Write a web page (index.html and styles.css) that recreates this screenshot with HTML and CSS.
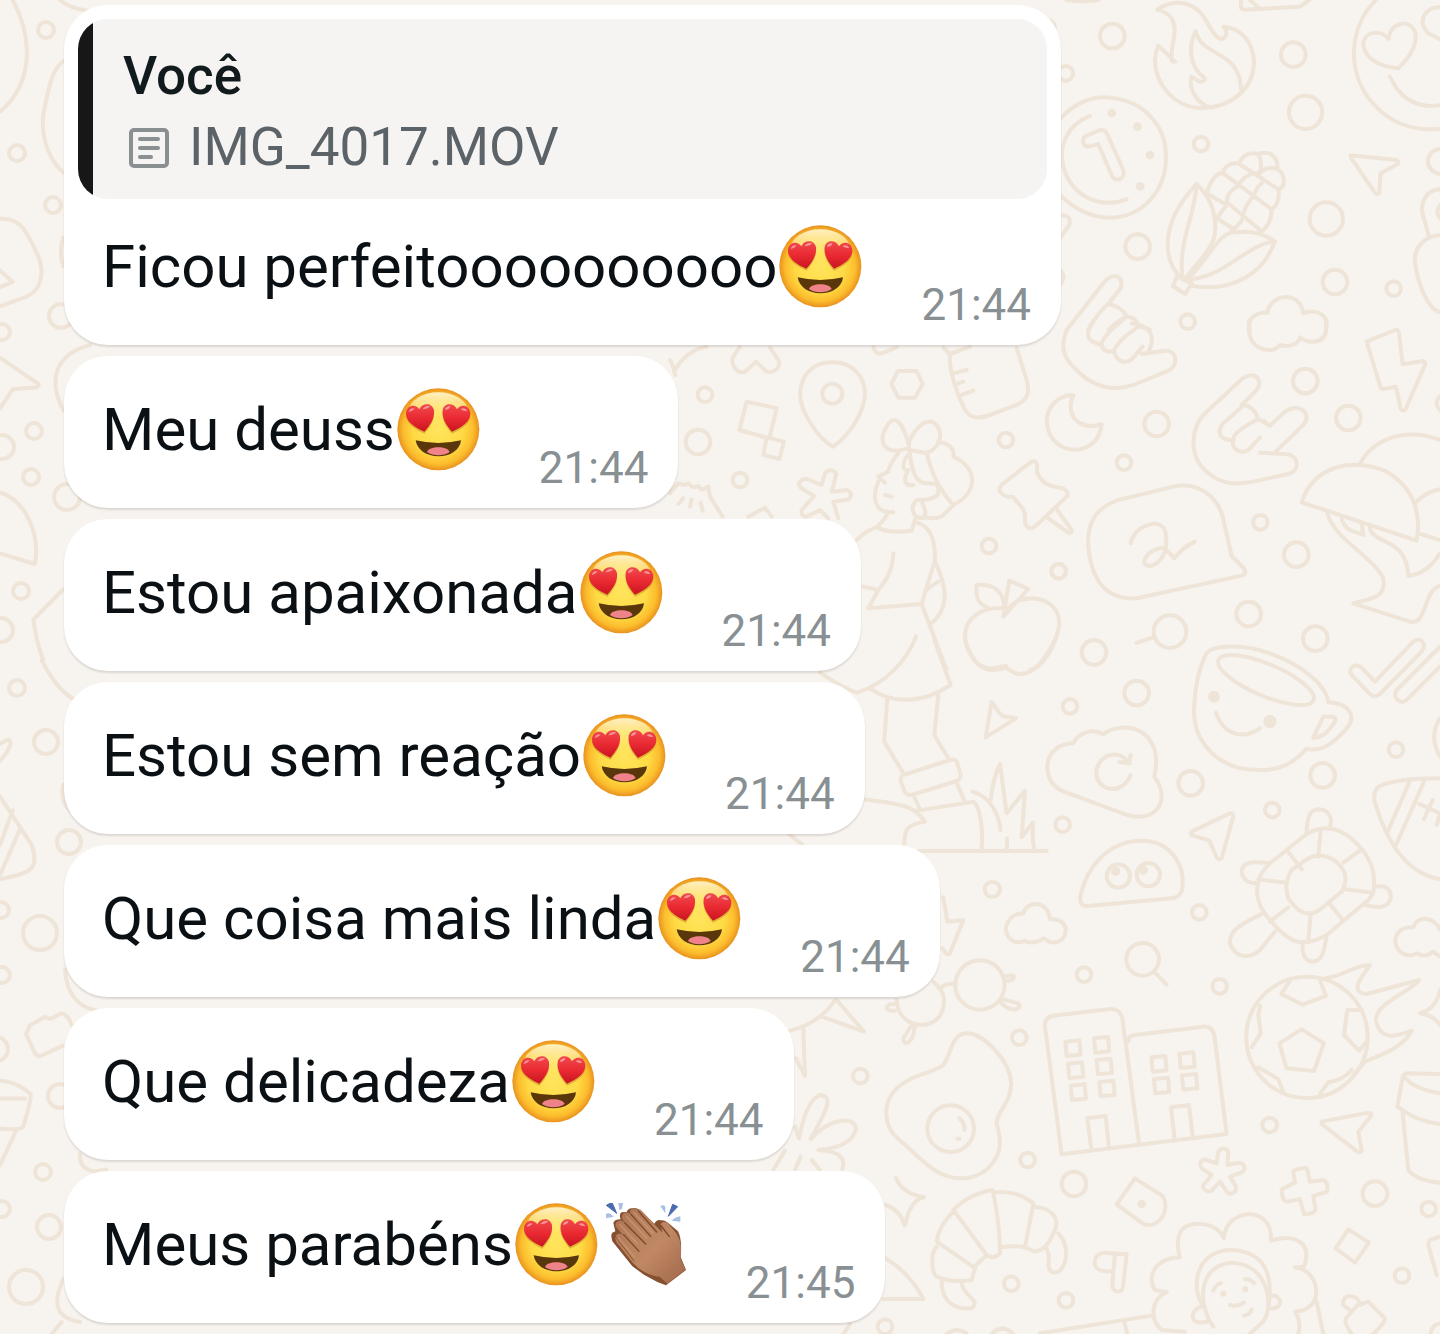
FILE: index.html
```
<!DOCTYPE html>
<html lang="pt-BR">

<head>
  <meta charset="UTF-8">
  <meta name="viewport" content="width=device-width, initial-scale=1.0">
  <title>Chat</title>
  <link rel="stylesheet" href="styles.css">
</head>

<body>
  <!-- wallpaper doodles -->
  <svg class="wallpaper" viewBox="0 0 1440 1334" preserveAspectRatio="xMinYMin slice" aria-hidden="true">
    <!-- flame, coin, corn, smiley -->
    <g transform="translate(1040 0) scale(.3333)">
      <path d="M80 0Q130 8 175 0M603 0V22Q605 29 615 29L780 20L808 0M630 0L655 22M32 62Q50 75 42 92" />
      <path d="M352 29C400 -5 455 5 485 42C510 75 520 112 543 117C560 115 566 95 550 80C602 82 642 130 642 187C640 270 570 325 480 324C400 320 345 250 345 180Q347 155 355 137L405 185Q390 188 395 165C395 125 415 90 395 55Q380 35 352 29Z" />
      <path d="M510 322C470 310 445 265 454 230L480 245Q500 243 492 232C460 210 437 155 467 93C485 175 600 145 604 272" />
      <circle cx="217" cy="108" r="37" /><circle cx="760" cy="164" r="37" /><circle cx="797" cy="337" r="50" />
      <circle cx="77" cy="220" r="22" /><circle cx="483" cy="432" r="22" /><circle cx="859" cy="657" r="50" />
      <circle cx="293" cy="740" r="37" /><circle cx="885" cy="846" r="37" /><circle cx="1061" cy="866" r="22" />
      <circle cx="443" cy="965" r="22" /><circle cx="1201" cy="484" r="37" /><circle cx="1170" cy="160" r="228" />
      <path d="M1075 205C1020 200 970 175 970 130C975 90 1030 90 1046 118C1050 60 1120 55 1127 105C1130 140 1105 175 1075 205ZM1200 22C1155 20 1130 65 1165 100L1200 118M1050 230Q1090 318 1175 318L1200 316" />
      <path d="M60 357C110 300 170 285 220 295C310 305 378 375 378 470C378 570 310 652 210 653Q130 653 60 585" />
      <path d="M150 348C80 375 55 440 70 500C95 590 180 628 260 598M145 440C125 440 122 410 145 405L175 392Q195 385 203 405L250 510C258 535 228 550 216 528L175 432L145 440Z" />
      <g class="fill"><circle cx="215" cy="339" r="13" /><circle cx="292" cy="380" r="13" /><circle cx="330" cy="465" r="13" /><circle cx="301" cy="559" r="13" /></g>
      <path d="M470 552C415 610 383 670 383 735C383 790 410 825 432 840L412 828L398 858L436 882L455 850L432 840C470 790 520 745 525 700C530 640 510 590 470 552ZM470 552C465 650 415 720 427 830M440 842C510 770 540 690 590 697Q650 688 705 724C670 820 580 880 450 857M440 840C560 830 610 740 700 724" />
      <path d="M500 580C510 545 530 515 550 520C550 500 575 485 598 492C605 465 630 455 655 462C690 450 715 470 712 508C735 520 740 560 715 568C720 595 710 620 695 628C695 660 680 685 660 698M550 520L695 628M598 492L715 568M655 462Q670 490 658 522C620 510 592 560 592 560M712 508Q680 495 658 522M592 560Q560 575 560 612M640 590Q650 560 665 550M610 640Q620 610 640 590M500 580L560 615L530 655M530 655L585 690M565 610L660 690M575 690Q610 670 610 640" />
      <path d="M932 466L1070 480Q1080 485 1072 493L1022 520L1018 578Q1012 588 1005 578L932 472Z" />
      <path d="M1200 568C1150 570 1140 620 1150 650L1168 712M1200 705C1150 710 1120 745 1125 790C1135 850 1160 925 1200 937M1200 615Q1185 635 1200 655" />
      <path d="M60 645Q95 645 88 675L60 715M60 810Q80 830 60 855" />
      <!-- call-me hand and cloud -->
      <path d="M80 990L190 850C215 815 255 825 242 865L205 912C250 920 260 950 262 950C290 950 295 980 295 980Q315 980 330 990M145 990Q180 930 205 912M205 990Q240 955 262 950" />
      <path d="M630 990C620 955 650 935 683 938C690 880 780 870 790 940C830 925 870 945 858 990" />
    </g>

    <!-- hands, speech bubble, moon, umbrella -->
    <g transform="translate(1040 320) scale(.3333)">
      <path d="M80 30C60 80 70 110 100 140C155 205 225 215 280 195L385 152C420 135 410 85 370 93L305 102M162 0C140 30 135 55 165 68L185 75C190 95 205 98 222 93C230 130 260 130 275 118L308 80M185 75Q185 50 250 0M222 93Q230 65 295 20M275 10C330 15 350 50 325 97" />
      <path d="M628 0C620 60 645 90 690 90Q710 88 720 75C745 82 775 75 780 52C800 70 855 75 858 30V0" />
      <path d="M100 225C50 225 20 265 20 305C25 370 75 395 120 388C155 380 180 355 185 312C135 330 90 305 92 255Q94 240 100 225Z" />
      <path d="M980 65L1065 30Q1075 27 1077 40L1088 133L1150 123Q1158 125 1155 135L1097 267Q1088 277 1082 265L1068 200L1030 207Q1022 205 1020 197Z" />
      <circle cx="796" cy="183" r="37" /><circle cx="350" cy="312" r="37" />
      <circle cx="925" cy="294" r="37" /><circle cx="252" cy="428" r="22" /><circle cx="661" cy="607" r="22" />
      <circle cx="769" cy="704" r="37" /><circle cx="56" cy="754" r="22" /><circle cx="626" cy="882" r="37" />
      <circle cx="826" cy="956" r="37" /><circle cx="1215" cy="250" r="25" />
      <circle cx="390" cy="935" r="49" /><path d="M290 969L340 952" />
      <path d="M605 255L650 210C675 175 635 150 605 178L500 275C450 320 445 410 500 455C550 500 600 492 640 485L740 463C785 455 780 400 730 402L660 398M605 255C635 255 650 280 655 297L690 317L735 275C775 245 820 280 790 315L710 392M605 262L550 310C520 350 560 365 580 358C570 395 615 405 630 385L660 352M580 358Q580 335 655 297L675 305" />
      <path d="M400 500L235 540C165 565 140 610 145 680C155 790 205 840 290 835L605 767Q625 760 610 743L575 708L548 590C530 525 470 485 400 500Z" />
      <path d="M272 670C285 610 370 590 377 640C390 730 320 755 313 727C315 690 370 680 375 685L403 715Q430 680 465 665" />
      <path d="M785 547L1130 662C1145 580 1120 500 1040 455C930 410 820 440 785 547ZM960 430C1010 345 1110 325 1200 360M1130 545Q1160 515 1200 508M1135 640L1200 660M862 580C885 660 1000 710 1030 775C1040 830 1000 835 940 850L1110 905C1160 920 1150 810 1200 798M905 597C915 635 950 635 970 645L965 612M990 625C1000 675 1100 650 1105 768Q1165 760 1200 700" />
    </g>

    <!-- cup, cloud, turtle, ticks, rugby ball -->
    <g transform="translate(1040 640) scale(.3333)">
      <path d="M498 42C520 10 620 15 690 40C790 75 860 140 865 187C930 190 950 230 920 265C880 310 850 335 798 327C750 385 690 400 600 385C510 360 460 290 462 210Q465 110 498 42Z" />
      <ellipse cx="678" cy="120" rx="155" ry="48" transform="rotate(23 678 120)" />
      <path d="M528 218C550 285 610 300 660 265M850 230H880Q890 235 885 245C865 275 850 293 820 293Z" />
      <g class="fill"><circle cx="522" cy="170" r="18" /><circle cx="690" cy="245" r="20" /></g>
      <path d="M100 310C50 310 20 345 22 385C25 430 55 450 80 458L260 525C350 550 395 480 343 410C365 320 320 260 245 263Q210 265 190 283C150 260 110 285 100 310Z" />
      <path d="M272 405C250 460 185 460 170 410C160 360 220 320 260 360L270 370M272 345L268 370L238 366" />
      <path d="M1005 125L970 88C945 60 915 90 940 110L990 162Q1005 175 1020 162L1145 35C1165 5 1135 -10 1120 5ZM1200 20L1070 150C1055 175 1085 200 1105 175L1200 80" />
      <circle cx="162" cy="37" r="37" /><circle cx="290" cy="159" r="37" /><circle cx="90" cy="199" r="22" />
      <circle cx="452" cy="430" r="37" /><circle cx="848" cy="406" r="37" /><circle cx="697" cy="510" r="22" />
      <circle cx="68" cy="554" r="22" /><circle cx="1068" cy="329" r="22" /><circle cx="478" cy="817" r="22" />
      <path d="M1200 235Q1165 290 1200 350" />
      <path d="M455 575L570 520Q580 518 580 530L545 655Q537 662 530 652L508 602L455 585Q450 580 455 575Z" />
      <path d="M145 798Q115 800 122 765C140 680 205 605 300 602C395 600 440 680 425 755Q415 773 395 775Z" />
      <circle cx="235" cy="708" r="35" /><circle cx="325" cy="704" r="35" />
      <g class="fill"><circle cx="227" cy="694" r="14" /><circle cx="310" cy="690" r="14" /></g>
      <path d="M690 670L800 582C870 540 930 580 975 640C1010 690 1010 760 985 780L860 885C780 930 740 900 695 845C640 790 635 720 690 670Z" />
      <path d="M755 690L800 658C850 630 890 660 910 690Q925 720 905 755L845 805C800 840 770 810 745 775Q730 730 755 690ZM842 572L835 650M742 632L785 688M910 668L965 628M655 718L740 728M915 748L1000 758M690 845L745 802M812 820L805 905M868 790L908 840" />
      <path d="M800 578C800 530 810 508 838 508C870 510 880 540 868 565M690 670C650 665 605 660 605 697C610 730 640 730 655 730M1008 740C1040 735 1055 750 1052 775C1045 805 1020 805 975 795M665 822C610 850 565 870 570 910C590 965 640 950 660 930L705 875M788 910C785 950 800 965 820 965C850 960 852 930 860 888" />
      <path d="M1200 415C1120 415 1060 420 1020 438Q1000 450 1003 480C1040 610 1100 700 1200 718M1110 422L1042 578M1155 418L1065 622M1138 492L1200 520M1178 480L1152 537M1200 525L1190 555" />
      <path d="M1200 870C1190 835 1135 820 1120 862C1080 860 1060 885 1068 915C1080 950 1115 950 1130 940Q1155 955 1180 935L1200 950" />
      <circle cx="308" cy="958" r="49" /><path d="M345 998L380 1034" />
    </g>

    <!-- buildings, football, curly head -->
    <g transform="translate(1040 960) scale(.3333)">
      <path d="M65 583L15 200Q12 172 40 167L210 147Q240 145 247 175L297 550M65 583L560 522L523 225Q515 197 490 200L290 224Q262 228 265 245" />
      <path d="M76 245L118 241L122 284L80 288ZM162 235L204 231L208 274L166 278ZM84 311L126 307L130 350L88 354ZM170 300L212 296L216 339L174 343ZM92 377L134 373L138 416L96 420ZM178 366L220 362L224 405L182 409ZM334 292L376 288L380 331L338 335ZM418 281L460 277L464 320L422 324ZM342 357L384 353L388 396L346 400ZM426 346L468 342L472 385L430 389ZM154 568L142 475L197 468L207 563M404 535L393 442L447 435L458 530" />
      <circle cx="132" cy="44" r="22" /><circle cx="539" cy="79" r="22" /><circle cx="689" cy="495" r="22" />
      <circle cx="102" cy="672" r="37" /><circle cx="1005" cy="701" r="37" /><circle cx="1166" cy="747" r="22" />
      <circle cx="1086" cy="947" r="22" /><circle cx="78" cy="1021" r="22" /><circle cx="801" cy="232" r="182" />
      <path d="M785 208L852 250L822 333L740 325L718 250ZM750 62L724 102L788 134L858 108L838 55M660 137L655 165L662 220L635 262M965 150H922L912 225L957 272L980 245M655 322L715 357L730 395M840 402L865 367Q910 360 935 330" />
      <path d="M860 53C910 50 940 15 990 15C975 40 920 95 980 102L1138 60C1120 90 1005 130 1008 180C1020 250 1080 225 1115 212C1090 265 1010 290 975 305L940 345" />
      <path d="M1200 90Q1190 145 1140 160Q1180 165 1200 195M1200 342L1100 340Q1090 343 1088 352L1072 440Q1130 485 1200 492M1092 352Q1130 390 1200 400M1088 460L1105 630Q1130 662 1200 668" />
      <path d="M845 485L985 458Q997 458 993 468L955 515L965 572Q960 580 952 575L845 492Z" />
      <path d="M530 610L535 575C545 560 565 565 565 580L562 615L590 610C615 605 620 630 605 637L570 650L588 680C590 700 570 705 562 697L540 665L515 692C500 700 485 685 490 675L515 645L485 625C475 610 485 595 500 600Z" />
      <path d="M765 668L760 635Q765 625 800 623L810 665L850 660Q865 665 862 695L820 708L827 750Q820 762 792 762L780 717L740 725Q725 720 725 688Z" />
      <path d="M285 655L230 733L310 792C355 810 395 750 368 708ZM925 808L887 865L945 908L987 848Z" />
      <g class="fill"><circle cx="305" cy="732" r="13" /></g>
      <path d="M260 883L190 878C155 885 155 930 190 933L220 935L217 980C225 1000 248 1000 250 975ZM225 883L220 935" />
      <path d="M552 835C530 785 450 780 425 810Q405 840 420 892C340 895 320 955 345 990L380 997C330 1020 330 1080 365 1110L435 1115M552 835C555 745 700 730 693 842C760 820 820 845 792 920L765 922C840 930 860 1050 765 1055Q785 1085 775 1122M0 1120L335 1067M253 1087L262 1122M830 1025L850 1122" />
      <path d="M520 1100C470 1030 475 910 580 908C690 915 705 1050 665 1090L620 1130M485 1030C450 970 475 870 575 870C680 875 700 950 685 1045M690 1005C730 1005 730 1050 690 1045M485 1040C450 1045 445 1100 500 1085M520 992Q530 970 543 970M615 958Q630 955 643 970M570 1035Q590 1042 612 1028M612 1067Q632 1062 635 1048" />
      <g class="fill"><circle cx="550" cy="1001" r="9" /><circle cx="616" cy="988" r="9" /></g>
      <path d="M935 1055L910 1035C905 1000 945 1000 960 1028L935 1055L918 1075Q910 1085 935 1122M960 1035L985 1025L1035 1075Q1038 1085 1000 1122M1200 830L1170 840Q1165 845 1165 855L1190 945M1200 1090Q1175 1095 1172 1122" />
    </g>

    <!-- pin, girl with a ribbon, apple -->
    <g transform="translate(670 340) scale(.3333)">
      <path d="M0 60Q10 75 15 105M15 90Q50 30 110 20M210 20L190 50C180 70 200 105 225 95L258 65L290 95C315 100 335 80 325 60L300 22M610 20Q615 45 635 40L680 22M820 22L840 42L900 20" />
      <path d="M490 320C450 300 390 220 390 160C395 100 430 67 487 67C545 67 585 105 585 165C580 220 540 285 490 320ZM684 93H740L758 132L735 173H685L664 132ZM230 185L320 205L298 295L208 270ZM290 292L342 305L328 357L280 345Z" />
      <circle cx="487" cy="161" r="30" /><circle cx="105" cy="164" r="22" /><circle cx="84" cy="306" r="37" />
      <circle cx="210" cy="420" r="22" /><circle cx="1008" cy="300" r="22" /><circle cx="957" cy="618" r="22" />
      <circle cx="1166" cy="693" r="22" />
      <path d="M0 460L25 430L45 435L55 430L70 442L85 438L95 450L115 440L120 470L158 530M40 475L25 492M65 478L60 500M92 488L98 512M235 530L285 503L305 530" />
      <path d="M840 42C835 100 870 180 885 210C905 240 930 235 960 225L1040 195C1075 180 1080 155 1070 120L1040 25M850 100L890 90M865 130L880 125M875 165L910 152" />
      <path d="M455 435L465 400C475 385 505 390 497 410L485 455L530 450C550 455 545 480 525 480L490 485L505 535M455 435L410 417C390 415 380 435 395 445L432 468L395 510Q392 530 410 530L450 510L475 535" />
      <path d="M718 325C700 240 670 220 650 260C625 300 640 335 685 332L718 325C710 300 750 240 785 245C830 265 810 335 765 338L718 330M805 305C840 310 855 330 850 350C920 380 930 455 850 495L815 530Q790 540 760 530M770 338Q790 430 850 495M718 330C725 390 735 430 770 430L800 432M800 432C820 470 790 480 740 480C720 500 725 535 760 535Q775 525 755 485M685 340Q660 370 655 395L625 410L645 428M625 425C605 470 615 515 655 515L645 535L620 562C660 580 700 575 725 572L735 540M645 465L665 470M655 517H670M718 340C690 370 700 395 715 390C695 425 710 440 730 435" />
      <path d="M560 600Q590 570 620 562M735 545C790 560 795 610 795 660L755 792L595 805L625 750L580 740M670 640C668 690 650 720 625 750M795 665C840 760 830 810 785 850M755 792L830 990M805 725Q780 740 770 750" />
      <path d="M990 455Q985 440 1000 430L1085 365C1100 360 1105 375 1100 395C1120 440 1150 440 1180 445Q1200 460 1190 470L1100 555C1080 575 1065 560 1065 540C1070 500 1040 495 1030 470Q1005 475 990 455ZM1135 535L1195 578Q1205 582 1205 570L1162 510" />
      <path d="M1000 805C940 800 885 830 885 890C890 940 920 990 970 985L1008 978M1050 780C1130 760 1180 810 1165 870C1150 930 1115 985 1080 990M1000 830L1075 747L1018 722ZM1003 800C1000 750 965 730 920 735C915 775 930 795 950 800M1000 830Q1015 795 1050 780" />
    </g>

    <!-- legs and grass -->
    <g transform="translate(780 640) scale(.3333)">
      <path d="M408 -10C380 60 320 130 232 158Q200 150 120 98M270 145C340 195 430 190 512 135L463 0M322 172L313 305L370 400M475 165L463 285L505 355M370 405L510 360Q530 355 532 370L542 405Q540 418 530 423L395 465Q378 468 372 450L363 425Q360 410 370 405ZM400 465L420 508M530 428L553 482M412 512L580 485C600 500 610 560 605 628M250 478C340 490 400 490 435 545C375 555 375 570 373 612M30 585L65 612M415 633H800M578 455C630 470 655 520 662 570M632 480Q640 410 660 372L680 520L735 452L725 592L760 547Q755 590 763 628M681 595V628" />
      <path d="M555 0C580 80 620 105 678 82C720 120 770 110 825 0M635 185Q660 225 668 228L708 235L617 292Z" />
      <circle cx="637" cy="748" r="23" />
      <path d="M730 820C690 820 665 860 685 890Q705 915 735 903Q760 915 792 895C820 920 860 905 857 865Q850 835 810 838C805 780 740 780 730 820ZM490 772Q495 800 502 845L550 840L510 940Q500 950 488 925" />
    </g>

    <!-- glasses, fried egg, croissant -->
    <g transform="translate(770 940) scale(.3333)">
      <circle cx="630" cy="135" r="74" /><circle cx="271" cy="408" r="22" /><circle cx="748" cy="293" r="22" />
      <circle cx="773" cy="660" r="22" /><circle cx="724" cy="1031" r="22" /><circle cx="345" cy="1160" r="22" />
      <circle cx="542" cy="566" r="70" />
      <path d="M380 180C385 280 525 280 522 180Q520 150 490 125M515 142Q530 128 556 132M375 192C345 190 340 215 375 212M425 255L400 295C400 320 430 315 435 255M705 110C740 95 740 125 705 122M690 185C720 220 760 210 745 190L700 178" />
      <path d="M590 280C640 280 720 360 724 430C720 500 680 510 680 550C690 590 695 620 680 650C650 710 590 720 550 713C480 700 440 640 385 597C340 560 335 490 380 445C430 400 490 400 520 375C545 340 545 280 590 280ZM568 535Q585 548 583 570M562 596H568" />
      <path d="M60 272Q150 250 195 180M200 180L282 275L155 230M100 265L105 408L78 355M75 560L87 595Q110 480 150 465C190 470 175 500 122 598C180 530 255 530 258 565C250 610 200 625 145 630C220 635 225 660 217 688M45 632L10 690M92 650L75 690M125 660L150 690" />
      <path d="M378 714Q395 760 462 772Q420 780 405 857Q390 810 347 795M347 955Q420 1000 460 1077H340M240 1152L220 1182" />
      <path d="M550 810Q600 760 668 750Q690 850 690 940Q670 960 650 945ZM675 757Q740 750 790 790L765 922Q730 915 692 922M793 800C860 805 870 850 850 880Q830 930 795 935L765 922M865 880C905 920 890 1000 850 998C820 985 850 950 828 925M550 815Q505 860 500 905L612 982L650 945M500 920C480 940 485 1000 500 1010Q550 1030 605 1020L615 985M515 1025C515 1090 560 1110 605 1105C635 1080 580 1070 575 1030M530 1182Q560 1160 590 1180M665 1182Q695 1150 730 1182" />
    </g>

    <!-- left edge, upper half -->
    <g transform="scale(.3333 .4209)">
      <path d="M38 0C100 90 100 200 0 265M180 0Q210 20 260 25M190 145C150 170 145 220 130 270C120 340 160 390 190 410M0 520C60 515 80 550 110 600C140 650 120 690 80 705L0 728M0 642L38 670L0 682M0 850L115 912Q118 918 110 920L38 925L0 970M270 820C170 840 140 900 190 975M0 1170C80 1190 120 1270 105 1340L0 1315M190 1400L100 1472Q110 1530 130 1568M190 565Q175 600 190 632" />
    </g>
    <circle cx="46" cy="30" r="8" /><circle cx="17" cy="153" r="8" /><circle cx="53" cy="205" r="8" />
    <circle cx="61" cy="316" r="12" /><circle cx="2" cy="332" r="8" /><circle cx="34" cy="431" r="8" />
    <circle cx="2" cy="447" r="12" /><circle cx="31" cy="477" r="8" /><circle cx="67" cy="497" r="13" />
    <circle cx="21" cy="591" r="8" /><circle cx="1" cy="630" r="12" />

    <!-- left edge, lower half -->
    <g transform="translate(0 660) scale(.3333 .4299)">
      <path d="M125 0Q170 70 225 93M0 195L25 185Q40 190 20 215L0 235M0 318L95 430C120 490 90 495 0 510M38 350L0 430M62 390L0 500M190 290Q180 330 210 350M195 720C200 780 240 810 290 815M90 850L135 830L150 835L185 822Q205 825 215 850M90 850L78 870L105 915Q115 925 125 920L190 897M0 978Q50 980 92 1010Q95 1020 70 1085Q60 1095 0 1090M0 1020H75M48 1095L0 1175M240 1150Q235 1180 280 1190L320 1185M190 1440C160 1490 160 1530 240 1540M155 1568L185 1540" />
    </g>
    <circle cx="17" cy="688" r="8" /><circle cx="46" cy="742" r="12" /><circle cx="69" cy="842" r="12" />
    <circle cx="1" cy="910" r="8" /><circle cx="40" cy="933" r="17" /><circle cx="2" cy="975" r="8" />
    <circle cx="-4" cy="1049" r="12" /><circle cx="60" cy="1096" r="12" /><circle cx="43" cy="1172" r="8" />
    <circle cx="2" cy="1209" r="8" /><circle cx="49" cy="1227" r="12" /><circle cx="26" cy="1287" r="17" />
  </svg>

  <!-- emoji used in the messages -->
  <svg class="sprites" aria-hidden="true">
    <defs>
      <radialGradient id="face" cx=".5" cy=".5" r=".5">
        <stop offset="0" stop-color="#ffe45c" />
        <stop offset=".6" stop-color="#fedb45" />
        <stop offset=".85" stop-color="#fcbd2d" />
        <stop offset="1" stop-color="#e8921f" />
      </radialGradient>
      <linearGradient id="shine" x1="0" y1="0" x2="0" y2="1">
        <stop offset="0" stop-color="#fff4cc" stop-opacity=".95" />
        <stop offset="1" stop-color="#ffe970" stop-opacity="0" />
      </linearGradient>
      <linearGradient id="heart-fill" x1="0" y1="0" x2="0" y2="1">
        <stop offset="0" stop-color="#f04a4e" />
        <stop offset=".5" stop-color="#ea2a33" />
        <stop offset="1" stop-color="#c9151f" />
      </linearGradient>
      <linearGradient id="skin" x1="0" y1="0" x2="1" y2="1">
        <stop offset="0" stop-color="#ab7353" />
        <stop offset=".55" stop-color="#c08863" />
        <stop offset="1" stop-color="#a0674a" />
      </linearGradient>
    </defs>
    <symbol id="heart-eyes" viewBox="111 74 249 249">
      <circle cx="235" cy="198" r="123" fill="url(#face)" />
      <ellipse cx="235" cy="143" rx="88" ry="56" fill="url(#shine)" />
      <path d="M193 211C165 198 137 180 138 154C140 130 167 125 178 143C185 124 216 120 222 145C225 171 209 193 193 211ZM276 211C304 199 332 181 331 155C329 131 302 126 291 144C284 125 253 121 248 146C245 172 260 194 276 211Z" fill="#a86016" opacity=".35" />
      <path d="M193 205C165 193 137 175 138 149C140 125 167 120 178 138C185 119 216 115 222 140C225 166 209 188 193 205Z" fill="url(#heart-fill)" />
      <path d="M276 205C304 193 332 175 331 149C329 125 302 120 291 138C284 119 253 115 248 140C245 166 260 188 276 205Z" fill="url(#heart-fill)" />
      <path d="M146 146Q151 132 164 136Q157 143 146 146ZM187 138Q197 124 211 129Q202 138 187 138ZM255 140Q257 127 271 129Q270 138 255 140ZM302 138Q312 130 322 142Q312 145 302 138Z" fill="#fff" opacity=".45" />
      <path d="M167 231Q235 247 303 231C300 262 270 279 235 279C200 279 171 260 167 231Z" fill="#59370b" />
      <path d="M201 266C206 247 264 247 269 266Q254 276 235 276Q216 276 201 266Z" fill="#f0838a" />
    </symbol>
    <symbol id="clap" viewBox="340 70 249 249">
      <path d="M347 77L364 68L378 101ZM561 81L546 74L533 110Z" fill="#4a6bb0" stroke="#4a6bb0" stroke-width="3" />
      <path d="M383 68L398 67L394 87L386 92ZM346 103Q357 96 369 112L346 115ZM509 80Q518 73 524 81L524 101ZM569 110V126L543 123Q555 111 569 110Z" fill="#a9bfdf" />
      <path d="M491 132Q500 117 509 122Q520 120 530 128L562 155Q575 180 570 232L586 271L526 317L500 307L460 285L425 260L365 185Q359 165 365 159L374 155L368 130Q370 120 390 119Q384 103 393 98L408 97Q413 84 426 86Q438 82 451 94Z" fill="#85502f" />
      <path d="M417 93Q428 82 440 90Q447 85 456 96L508 152L515 158L510 132Q521 120 533 132L556 160Q577 190 569 235L584 270L530 312L508 292Q458 285 427 250L377 187Q370 169 380 163Q390 158 402 172L377 143Q370 130 382 124Q392 119 402 129L395 118Q390 105 402 99Q412 96 421 104Z" fill="url(#skin)" />
      <path d="M421 104L480 170M402 129L465 193M399 165L445 215M443 94L498 157M512 139L536 171" fill="none" stroke="#7c482b" stroke-width="4" stroke-linecap="round" />
      <path d="M370 165L430 244" fill="none" stroke="#8a5535" stroke-width="3" stroke-linecap="round" />
      <path d="M430 99L486 160M408 111L468 175M388 135L440 192M383 175L430 230" fill="none" stroke="#ce9876" stroke-width="6" stroke-linecap="round" opacity=".6" />
    </symbol>
  </svg>

  <main class="chat">
    <article class="message">
      <div class="quote">
        <h2 class="quote-author">Você</h2>
        <p class="quote-file">
          <svg class="file-icon" viewBox="0 0 40 40" aria-hidden="true">
            <rect x="2" y="2" width="36" height="36" rx="3" />
            <path d="M11 11H29M11 20H29M11 29H22" />
          </svg>
          IMG_4017.MOV
        </p>
      </div>
      <div class="message-body">
        <p class="message-text">Ficou perfeitoooooooooo<svg class="emoji" role="img" aria-label="😍"><use href="#heart-eyes" /></svg></p>
        <time class="message-time">21:44</time>
      </div>
    </article>

    <article class="message">
      <div class="message-body">
        <p class="message-text">Meu deuss<svg class="emoji" role="img" aria-label="😍"><use href="#heart-eyes" /></svg></p>
        <time class="message-time">21:44</time>
      </div>
    </article>

    <article class="message">
      <div class="message-body">
        <p class="message-text">Estou apaixonada<svg class="emoji" role="img" aria-label="😍"><use href="#heart-eyes" /></svg></p>
        <time class="message-time">21:44</time>
      </div>
    </article>

    <article class="message">
      <div class="message-body">
        <p class="message-text">Estou sem reação<svg class="emoji" role="img" aria-label="😍"><use href="#heart-eyes" /></svg></p>
        <time class="message-time">21:44</time>
      </div>
    </article>

    <article class="message">
      <div class="message-body">
        <p class="message-text">Que coisa mais linda<svg class="emoji" role="img" aria-label="😍"><use href="#heart-eyes" /></svg></p>
        <time class="message-time">21:44</time>
      </div>
    </article>

    <article class="message">
      <div class="message-body">
        <p class="message-text">Que delicadeza<svg class="emoji" role="img" aria-label="😍"><use href="#heart-eyes" /></svg></p>
        <time class="message-time">21:44</time>
      </div>
    </article>

    <article class="message">
      <div class="message-body">
        <p class="message-text">Meus parabéns<svg class="emoji" role="img" aria-label="😍"><use href="#heart-eyes" /></svg><svg class="emoji" role="img" aria-label="👏🏽"><use href="#clap" /></svg></p>
        <time class="message-time">21:45</time>
      </div>
    </article>
  </main>
</body>

</html>
```
FILE: styles.css
```
* {
  box-sizing: border-box;
  padding: 0;
  margin: 0;
}

body {
  position: relative;
  min-height: 100vh;
  overflow-x: hidden;
  background-color: #f7f3ee;
  font-family: Roboto, sans-serif;
  color: #0b1014;
}

.wallpaper {
  position: absolute;
  top: 0;
  left: 0;
  z-index: -1;
  width: 100%;
  height: 100%;
  fill: none;
  stroke: #efe4d8;
  stroke-width: 4px;
  stroke-linecap: round;
  stroke-linejoin: round;
}

.wallpaper path,
.wallpaper circle,
.wallpaper ellipse {
  vector-effect: non-scaling-stroke;
}

.wallpaper .fill {
  fill: #efe4d8;
  stroke: none;
}

.sprites {
  position: absolute;
  width: 0;
  height: 0;
}

.chat {
  display: flex;
  flex-direction: column;
  align-items: flex-start;
  gap: 11px;
  padding: 5px 64px 8px;
}

.message {
  background-color: #fff;
  border-radius: 44px;
  box-shadow: 0 2px 2px rgba(60, 50, 40, .14);
}

.message-body {
  display: flex;
  align-items: flex-end;
  gap: 59px;
  padding: 32px 30px 16px 38px;
}

.message-text {
  display: flex;
  align-items: center;
  gap: 2px;
  margin-bottom: 21px;
  font-size: 60px;
  line-height: 83px;
  white-space: nowrap;
}

.emoji {
  width: 83px;
  height: 83px;
}

.emoji + .emoji {
  margin-left: 4px;
}

.message-time {
  font-size: 44px;
  line-height: 48px;
  color: #889093;
}

.quote {
  padding: 22px 30px 16px 45px;
  border-radius: 30px;
  background: linear-gradient(to right, #171717 15px, #f5f4f3 15px);
}

.message:has(.quote) {
  padding-top: 14px;
}

.message .quote {
  margin: 0 14px;
}

.quote + .message-body {
  padding-top: 26px;
}

.quote-author {
  font-size: 53px;
  font-weight: 500;
  line-height: 71px;
  color: #111b1e;
}

.quote-file {
  display: flex;
  align-items: center;
  gap: 20px;
  padding-left: 6px;
  font-size: 53px;
  line-height: 71px;
  color: #5b6368;
}

.file-icon {
  width: 40px;
  height: 40px;
  fill: none;
  stroke: #8a8f91;
  stroke-width: 4px;
  stroke-linecap: round;
}
```
